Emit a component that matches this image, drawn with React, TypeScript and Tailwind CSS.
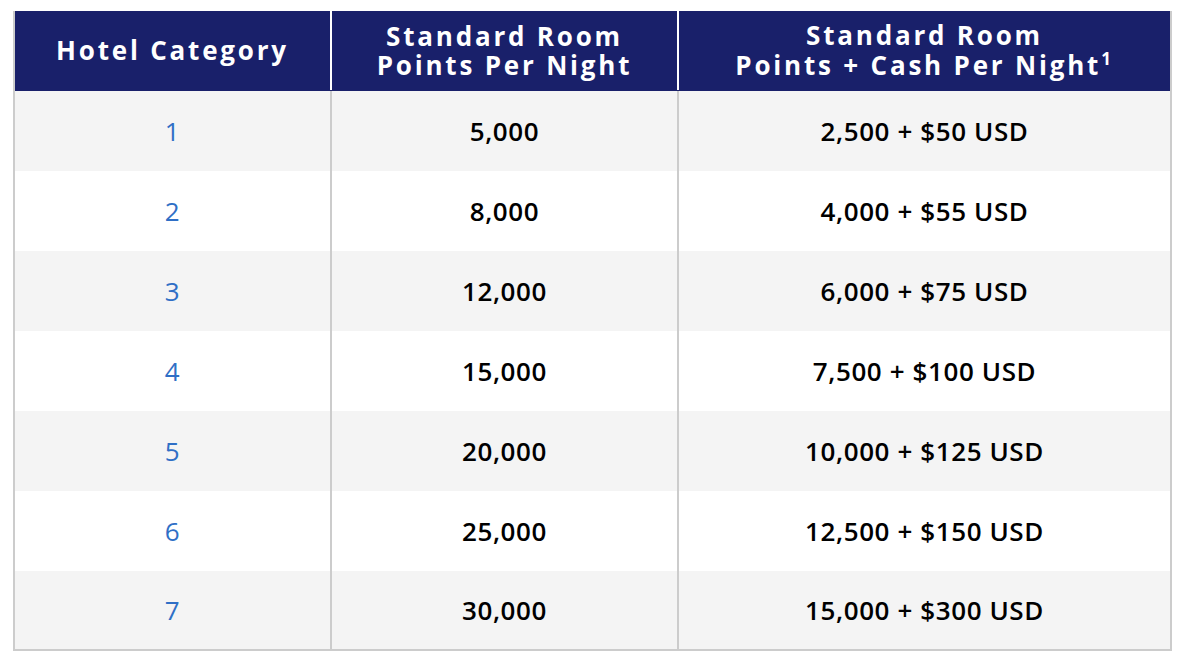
import React from "react";

const rows = [
  ["1", "5,000", "2,500 + $50 USD"],
  ["2", "8,000", "4,000 + $55 USD"],
  ["3", "12,000", "6,000 + $75 USD"],
  ["4", "15,000", "7,500 + $100 USD"],
  ["5", "20,000", "10,000 + $125 USD"],
  ["6", "25,000", "12,500 + $150 USD"],
  ["7", "30,000", "15,000 + $300 USD"],
];

export default function App() {
  return (
    <div
      className="w-[1188px] h-[666px] bg-white pt-[11px] pl-[13px]"
      style={{ fontFamily: '"Open Sans", "Noto Sans", sans-serif' }}
    >
      <div className="w-[1159px] border-x-2 border-b-2 border-[#cccccc]">
        <div className="flex h-[80px] bg-[#19206a] text-white font-bold text-[26px] leading-[29px] tracking-[2.8px] text-center pb-[1px]">
          <div className="w-[317px] border-r-2 border-white flex items-center justify-center">
            Hotel Category
          </div>
          <div className="w-[347px] border-r-2 border-white flex items-center justify-center">
            Standard Room
            <br />
            Points Per Night
          </div>
          <div className="flex-1 flex items-center justify-center">
            <span>
              Standard Room
              <br />
              Points + Cash Per Night
              <span className="text-[17px] align-[10px] leading-none">1</span>
            </span>
          </div>
        </div>
        {rows.map((r, i) => (
          <div
            key={i}
            className={`flex ${i === rows.length - 1 ? "h-[78px]" : "h-[80px]"} ${
              i % 2 === 0 ? "bg-[#f4f4f4]" : "bg-white"
            } text-[26px] tracking-[0.6px]`}
          >
            <div className="w-[317px] border-r-2 border-[#cccccc] flex items-center justify-center text-[#2f6fc6] font-normal">
              {r[0]}
            </div>
            <div className="w-[347px] border-r-2 border-[#cccccc] flex items-center justify-center text-black font-[550]">
              {r[1]}
            </div>
            <div className="flex-1 flex items-center justify-center text-black font-[550]">
              {r[2]}
            </div>
          </div>
        ))}
      </div>
    </div>
  );
}
